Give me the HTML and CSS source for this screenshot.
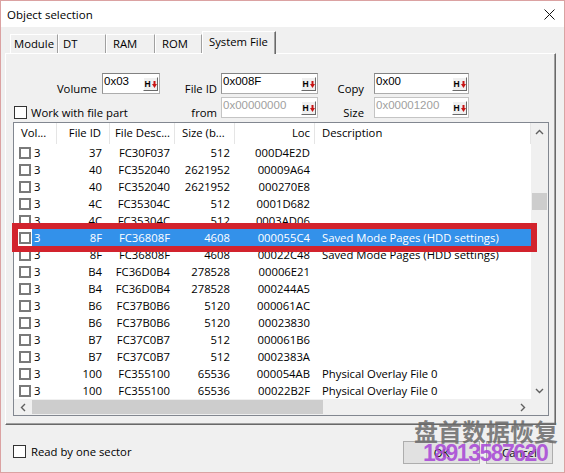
FILE: index.html
```html
<!DOCTYPE html>
<html>
<head>
<meta charset="utf-8">
<title>Object selection</title>
<link rel="stylesheet" href="styles.css">
</head>
<body>
<div class="window">
  <div class="titlebar">
    <span class="title">Object selection</span>
    <svg class="close" width="11" height="11" viewBox="0 0 11 11"><path d="M0.5 0.5 L10.5 10.5 M10.5 0.5 L0.5 10.5" stroke="#111" stroke-width="1" fill="none"/></svg>
  </div>
  <div class="tabs">
    <div class="tab t-module">Module</div>
    <div class="tab t-dt">DT</div>
    <div class="tab t-ram">RAM</div>
    <div class="tab t-rom">ROM</div>
    <div class="tab active">System File</div>
  </div>
  <div class="panel">
    <div class="fields">
      <div class="lbl lbl-a">Volume</div>
      <div class="field"><span class="val">0x03</span><span class="hbtn">H<svg width="5" height="7" viewBox="0 0 5 7"><rect x="1.5" y="0" width="2" height="3.5" fill="#c81414"/><polygon points="0,3 5,3 2.5,7" fill="#c81414"/></svg></span></div>
      <div class="lbl lbl-b">File ID</div>
      <div class="field"><span class="val">0x008F</span><span class="hbtn">H<svg width="5" height="7" viewBox="0 0 5 7"><rect x="1.5" y="0" width="2" height="3.5" fill="#c81414"/><polygon points="0,3 5,3 2.5,7" fill="#c81414"/></svg></span></div>
      <div class="lbl lbl-c">Copy</div>
      <div class="field"><span class="val">0x00</span><span class="hbtn">H<svg width="5" height="7" viewBox="0 0 5 7"><rect x="1.5" y="0" width="2" height="3.5" fill="#c81414"/><polygon points="0,3 5,3 2.5,7" fill="#c81414"/></svg></span></div>

      <div class="wfp"><span class="chk"></span><span>Work with file part</span></div>
      <div class="lbl lbl-b">from</div>
      <div class="field disabled"><span class="val">0x00000000</span><span class="hbtn">H<svg width="5" height="7" viewBox="0 0 5 7"><rect x="1.5" y="0" width="2" height="3.5" fill="#c81414"/><polygon points="0,3 5,3 2.5,7" fill="#c81414"/></svg></span></div>
      <div class="lbl lbl-c">Size</div>
      <div class="field disabled"><span class="val">0x00001200</span><span class="hbtn">H<svg width="5" height="7" viewBox="0 0 5 7"><rect x="1.5" y="0" width="2" height="3.5" fill="#c81414"/><polygon points="0,3 5,3 2.5,7" fill="#c81414"/></svg></span></div>
    </div>

    <div class="list">
      <div class="table">
        <div class="hdr">
          <div class="h-vol">Vol...</div>
          <div class="h-fid">File ID</div>
          <div class="h-desc">File Desc...</div>
          <div class="h-size">Size (b...</div>
          <div class="h-loc">Loc</div>
          <div class="h-descr">Description</div>
        </div>
        <div class="row"><div class="c-vol"><span class="lchk"></span>3</div><div class="c-fid">37</div><div class="c-desc">FC30F037</div><div class="c-size">512</div><div class="c-loc">000D4E2D</div><div class="c-descr"></div></div>
        <div class="row"><div class="c-vol"><span class="lchk"></span>3</div><div class="c-fid">40</div><div class="c-desc">FC352040</div><div class="c-size">2621952</div><div class="c-loc">00009A64</div><div class="c-descr"></div></div>
        <div class="row"><div class="c-vol"><span class="lchk"></span>3</div><div class="c-fid">40</div><div class="c-desc">FC352040</div><div class="c-size">2621952</div><div class="c-loc">000270E8</div><div class="c-descr"></div></div>
        <div class="row"><div class="c-vol"><span class="lchk"></span>3</div><div class="c-fid">4C</div><div class="c-desc">FC35304C</div><div class="c-size">512</div><div class="c-loc">0001D682</div><div class="c-descr"></div></div>
        <div class="row"><div class="c-vol"><span class="lchk"></span>3</div><div class="c-fid">4C</div><div class="c-desc">FC35304C</div><div class="c-size">512</div><div class="c-loc">0003AD06</div><div class="c-descr"></div></div>
        <div class="row sel"><div class="c-vol"><span class="lchk"></span>3</div><div class="c-fid">8F</div><div class="c-desc">FC36808F</div><div class="c-size">4608</div><div class="c-loc">000055C4</div><div class="c-descr">Saved Mode Pages (HDD settings)</div></div>
        <div class="row"><div class="c-vol"><span class="lchk"></span>3</div><div class="c-fid">8F</div><div class="c-desc">FC36808F</div><div class="c-size">4608</div><div class="c-loc">00022C48</div><div class="c-descr">Saved Mode Pages (HDD settings)</div></div>
        <div class="row"><div class="c-vol"><span class="lchk"></span>3</div><div class="c-fid">B4</div><div class="c-desc">FC36D0B4</div><div class="c-size">278528</div><div class="c-loc">00006E21</div><div class="c-descr"></div></div>
        <div class="row"><div class="c-vol"><span class="lchk"></span>3</div><div class="c-fid">B4</div><div class="c-desc">FC36D0B4</div><div class="c-size">278528</div><div class="c-loc">000244A5</div><div class="c-descr"></div></div>
        <div class="row"><div class="c-vol"><span class="lchk"></span>3</div><div class="c-fid">B6</div><div class="c-desc">FC37B0B6</div><div class="c-size">5120</div><div class="c-loc">000061AC</div><div class="c-descr"></div></div>
        <div class="row"><div class="c-vol"><span class="lchk"></span>3</div><div class="c-fid">B6</div><div class="c-desc">FC37B0B6</div><div class="c-size">5120</div><div class="c-loc">00023830</div><div class="c-descr"></div></div>
        <div class="row"><div class="c-vol"><span class="lchk"></span>3</div><div class="c-fid">B7</div><div class="c-desc">FC37C0B7</div><div class="c-size">512</div><div class="c-loc">000061B6</div><div class="c-descr"></div></div>
        <div class="row"><div class="c-vol"><span class="lchk"></span>3</div><div class="c-fid">B7</div><div class="c-desc">FC37C0B7</div><div class="c-size">512</div><div class="c-loc">0002383A</div><div class="c-descr"></div></div>
        <div class="row"><div class="c-vol"><span class="lchk"></span>3</div><div class="c-fid">100</div><div class="c-desc">FC355100</div><div class="c-size">65536</div><div class="c-loc">000054AB</div><div class="c-descr">Physical Overlay File 0</div></div>
        <div class="row"><div class="c-vol"><span class="lchk"></span>3</div><div class="c-fid">100</div><div class="c-desc">FC355100</div><div class="c-size">65536</div><div class="c-loc">00022B2F</div><div class="c-descr">Physical Overlay File 0</div></div>
      </div>
      <div class="vscroll">
        <div class="arrow"><svg width="9" height="6" viewBox="0 0 9 6"><polyline points="1,5 4.5,1.5 8,5" fill="none" stroke="#606060" stroke-width="1.4"/></svg></div>
        <div class="vtrack"><div class="vthumb"></div></div>
        <div class="arrow"><svg width="9" height="6" viewBox="0 0 9 6"><polyline points="1,1 4.5,4.5 8,1" fill="none" stroke="#606060" stroke-width="1.4"/></svg></div>
      </div>
      <div class="hscroll">
        <div class="harrow"><svg width="6" height="9" viewBox="0 0 6 9"><polyline points="5,1 1.5,4.5 5,8" fill="none" stroke="#606060" stroke-width="1.4"/></svg></div>
        <div class="htrack"><div class="hthumb"></div></div>
        <div class="harrow"><svg width="6" height="9" viewBox="0 0 6 9"><polyline points="1,1 4.5,4.5 1,8" fill="none" stroke="#606060" stroke-width="1.4"/></svg></div>
      </div>
      <div class="corner"></div>
    </div>
  </div>

  <div class="footer">
    <div class="rbos"><span class="chk"></span><span>Read by one sector</span></div>
    <div class="buttons">
      <div class="btn btn-ok">OK</div>
      <div class="btn btn-cancel">Cancel</div>
    </div>
  </div>

  <div class="hl"></div>
  <div class="wm-cn">盘首数据恢复</div>
  <div class="wm-num">18913587620</div>
</div>
</body>
</html>
```

FILE: styles.css
```css
* { box-sizing: border-box; }

body {
  margin: 0;
  font-family: "Open Sans", "Noto Sans", sans-serif;
  font-size: 11.3px;
  color: #000;
  background: #fff;
}

.window {
  position: relative;
  width: 565px;
  height: 473px;
  border: 1px solid #dba2a2;
  background: #f0f0f0;
  display: flex;
  flex-direction: column;
  overflow: hidden;
}

/* title bar */
.titlebar {
  flex: none;
  height: 26px;
  background: #fff;
  display: flex;
  align-items: center;
  justify-content: space-between;
  padding: 0 9px 0 6px;
}
.title { font-size: 11.5px; }

/* tabs */
.tabs {
  flex: none;
  height: 27px;
  display: flex;
  align-items: flex-end;
  padding-left: 9px;
  margin-bottom: -1px;
  position: relative;
  z-index: 1;
}
.tab {
  height: 19px;
  line-height: 17px;
  margin-bottom: 1px;
  border-top: 1px solid #fff;
  border-left: 1px solid #fff;
  border-right: 1px solid #a0a0a0;
  padding-left: 6px;
  white-space: nowrap;
}
.t-module { width: 48px; padding-left: 3px; }
.t-dt { width: 48px; padding-left: 4px; }
.t-ram { width: 49px; }
.t-rom { width: 47px; }
.tab.active {
  width: 74px;
  height: 23px;
  line-height: 20px;
  margin-bottom: 0;
  background: #f0f0f0;
  border-right: 1px solid #696969;
  box-shadow: inset -1px 0 0 #a0a0a0;
}

/* panel */
.panel {
  flex: none;
  margin-left: 4px;
  width: 551px;
  height: 372px;
  border: 1px solid;
  border-color: #fff #696969 #696969 #fff;
  box-shadow: inset -1px -1px 0 #a0a0a0;
  padding-top: 19px;
}

.fields {
  display: grid;
  grid-template-columns: 96px 58px 61px 97px 56px 95px;
  grid-template-rows: 21px 21px;
  row-gap: 3px;
}
.lbl {
  align-self: end;
  text-align: right;
  line-height: 15px;
  margin-bottom: -2px;
  white-space: nowrap;
}
.lbl-a { padding-right: 5px; }
.lbl-b { padding-right: 4px; }
.lbl-c { padding-right: 10px; }

.field {
  background: #fff;
  border: 1px solid #adadad;
  border-top-color: #828282;
  border-left-color: #939393;
  display: flex;
  justify-content: space-between;
  align-items: flex-start;
  padding: 1px 1px 0 1px;
  font-family: "Liberation Sans", Arial, sans-serif;
  font-size: 11.5px;
  line-height: 13px;
}
.field.disabled { color: #a0a0a0; border-color: #c4c4c4; }
.hbtn {
  width: 15px;
  height: 14px;
  margin-top: 2px;
  display: flex;
  align-items: center;
  justify-content: center;
  gap: 1px;
  background: #f0f0f0;
  border: 1px solid;
  border-color: #fff #6a6a6a #6a6a6a #fff;
  font: bold 8.5px/1 "Liberation Sans", Arial, sans-serif;
  color: #000;
}

.chk {
  flex: none;
  width: 13px;
  height: 13px;
  border: 1px solid #333;
  background: #fff;
}
.wfp {
  grid-column: span 2;
  align-self: end;
  display: flex;
  align-items: center;
  gap: 4px;
  padding-left: 8px;
  line-height: 15px;
  margin-bottom: -2px;
  white-space: nowrap;
}

/* list view */
.list {
  margin: 4px 6px 0 7px;
  height: 294px;
  border: 1px solid #828790;
  background: #fff;
  display: grid;
  grid-template-columns: 517px 17px;
  grid-template-rows: 276px 16px;
}
.table { overflow: hidden; }
.hdr, .row {
  display: grid;
  grid-template-columns: 43px 53px 65px 60px 80px 216px;
  white-space: nowrap;
}
.hdr { height: 21px; line-height: 20px; }
.hdr > div { border-right: 1px solid #e5e5e5; overflow: hidden; }
.h-vol { padding-left: 7px; }
.h-fid { text-align: right; padding-right: 8px; }
.h-desc { padding-left: 5px; }
.h-size { padding-left: 7px; }
.h-loc { text-align: right; padding-right: 4px; }
.h-descr { padding-left: 7px; }

.row { height: 17px; line-height: 17px; }
.row > div { overflow: hidden; }
.c-vol { display: flex; align-items: center; gap: 3px; padding-left: 5px; }
.lchk {
  flex: none;
  width: 12px;
  height: 12px;
  border: 2px solid #7a7a7a;
  background: #fff;
}
.c-fid { text-align: right; padding-right: 8px; }
.c-desc, .c-size, .c-loc { text-align: right; padding-right: 5px; }
.c-descr { padding-left: 7px; }
.row.sel {
  background: linear-gradient(to right, #fff 18px, #3391ea 18px);
  color: #fff;
}

.vscroll {
  background: #f0f0f0;
  display: flex;
  flex-direction: column;
}
.arrow {
  flex: none;
  height: 17px;
  display: flex;
  align-items: center;
  justify-content: center;
}
.vtrack { flex: 1; }
.vthumb { margin: 53px 1px 0; height: 17px; background: #cdcdcd; }

.hscroll { background: #f0f0f0; display: flex; }
.harrow {
  flex: none;
  width: 17px;
  display: flex;
  align-items: center;
  justify-content: center;
}
.htrack { flex: 1; }
.hthumb { margin: 1px 0 1px 1px; width: 291px; height: 14px; background: #cdcdcd; }
.corner { background: #f0f0f0; }

/* footer */
.footer {
  flex: 1;
  display: flex;
  align-items: center;
  padding: 5px 11px 0 12px;
}
.rbos { display: flex; align-items: center; gap: 5px; white-space: nowrap; }
.buttons { margin-left: auto; margin-top: 3px; display: flex; gap: 6px; }
.btn {
  height: 23px;
  border: 1px solid #adadad;
  background: #e1e1e1;
  display: flex;
  align-items: center;
  justify-content: center;
}
.btn-ok { width: 77px; }
.btn-cancel { width: 67px; }

/* overlays: annotation box and watermark */
.hl {
  position: absolute;
  left: 11px;
  top: 222px;
  width: 525px;
  height: 29px;
  border: 6px solid #d2232d;
}
.wm-cn {
  position: absolute;
  left: 413px;
  top: 418px;
  font-family: "Noto Sans CJK SC", sans-serif;
  font-size: 24px;
  line-height: 24px;
  font-weight: bold;
  color: rgba(105, 105, 105, 0.85);
  white-space: nowrap;
}
.wm-num {
  position: absolute;
  left: 422px;
  top: 441px;
  font-family: "Liberation Sans", Arial, sans-serif;
  font-size: 23px;
  line-height: 23px;
  font-weight: bold;
  letter-spacing: -1.5px;
  color: rgba(168, 72, 214, 0.88);
  white-space: nowrap;
}
```
